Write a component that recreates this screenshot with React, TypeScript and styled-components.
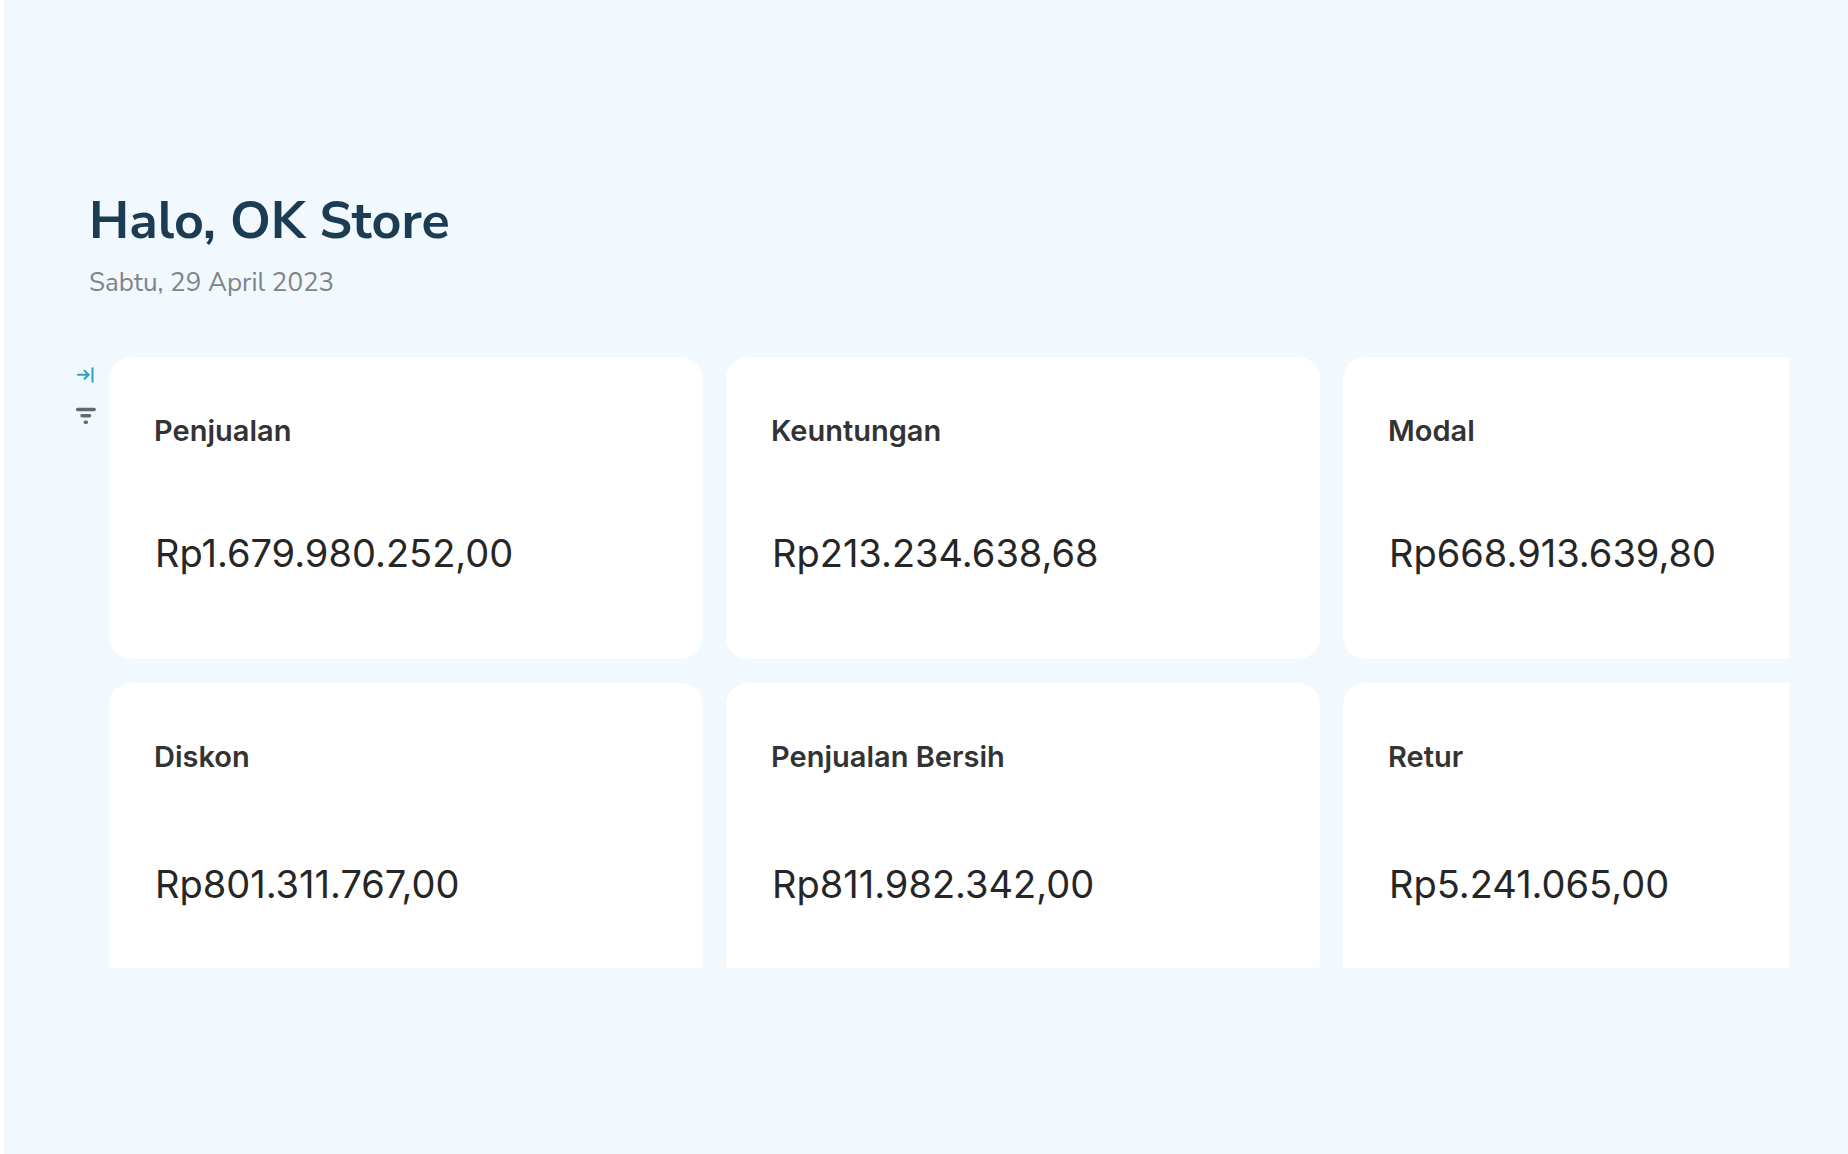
import React from "react";
import styled, { createGlobalStyle } from "styled-components";

const GlobalStyle = createGlobalStyle`
  *, *::before, *::after { box-sizing: border-box; }
  body { margin: 0; background: #f1f8fe; }
`;

const Page = styled.main`
  display: flex;
  flex-direction: column;
  height: 100vh;
  padding: 189px 59px 186px 70px;
  border-left: 4px solid #ffffff;
  background: #f1f8fe;
  font-family: Inter, "Liberation Sans", sans-serif;
`;

const Header = styled.header`
  padding-left: 15px;
  margin-bottom: 56px;
  font-family: "Nunito Sans", Nunito, Lato, "Open Sans", sans-serif;
`;

const Greeting = styled.h1`
  margin: 0;
  color: #1b3c53;
  font-size: 52px;
  font-weight: 700;
  line-height: 64px;
`;

const Today = styled.p`
  margin: 12px 0 0;
  color: #808487;
  font-size: 26px;
  line-height: 36px;
`;

const Body = styled.div`
  display: flex;
  flex: 1;
  gap: 11px;
  min-height: 0;
`;

const Tools = styled.div`
  display: flex;
  flex: none;
  flex-direction: column;
  gap: 18px;
  padding-top: 6px;
`;

const ToolButton = styled.button<{ $tint: string }>`
  display: flex;
  width: 24px;
  height: 24px;
  padding: 0;
  border: 0;
  background: none;
  color: ${(p) => p.$tint};
  cursor: pointer;
`;

const Viewport = styled.section`
  flex: 1;
  min-width: 0;
  overflow: hidden;
`;

const CardGrid = styled.div`
  display: grid;
  grid-template-columns: repeat(3, 594px);
  grid-template-rows: 302px 312px;
  gap: 24px 23px;
`;

const Card = styled.article`
  display: flex;
  flex-direction: column;
  padding: 56px 45px 2px;
  border-radius: 22px;
  background: #ffffff;
`;

const CardTitle = styled.h2`
  margin: 0;
  color: #333333;
  font-size: 29px;
  font-weight: 600;
  line-height: 36px;
`;

const CardValue = styled.p`
  display: flex;
  flex: 1;
  align-items: center;
  margin: 0;
  padding-left: 1px;
  color: #262626;
  font-size: 38px;
  line-height: 48px;
`;

const metrics = [
  { title: "Penjualan", value: "Rp1.679.980.252,00" },
  { title: "Keuntungan", value: "Rp213.234.638,68" },
  { title: "Modal", value: "Rp668.913.639,80" },
  { title: "Diskon", value: "Rp801.311.767,00" },
  { title: "Penjualan Bersih", value: "Rp811.982.342,00" },
  { title: "Retur", value: "Rp5.241.065,00" },
];

function ExpandIcon() {
  return (
    <svg width="24" height="24" viewBox="0 0 24 24" fill="none" stroke="currentColor" strokeWidth="2" strokeLinecap="round" strokeLinejoin="round" aria-hidden="true">
      <path d="M4 11.7H14.5M10.5 7.7l4.2 4-4.2 4" />
      <path d="M18.5 4.5v15" strokeLinecap="butt" />
    </svg>
  );
}

function FilterIcon() {
  return (
    <svg width="24" height="24" viewBox="0 0 24 24" fill="none" stroke="currentColor" strokeWidth="3.4" strokeLinecap="round" aria-hidden="true">
      <path d="M3.6 4.5h16.6M8 10.8h7.6M11.2 17.2h1.2" />
    </svg>
  );
}

export default function App() {
  return (
    <>
      <GlobalStyle />
      <Page>
        <Header>
          <Greeting>Halo, OK Store</Greeting>
          <Today>Sabtu, 29 April 2023</Today>
        </Header>
        <Body>
          <Tools>
            <ToolButton type="button" $tint="#2ba3c4" aria-label="Expand">
              <ExpandIcon />
            </ToolButton>
            <ToolButton type="button" $tint="#66696c" aria-label="Filter">
              <FilterIcon />
            </ToolButton>
          </Tools>
          <Viewport>
            <CardGrid>
              {metrics.map((m) => (
                <Card key={m.title}>
                  <CardTitle>{m.title}</CardTitle>
                  <CardValue>{m.value}</CardValue>
                </Card>
              ))}
            </CardGrid>
          </Viewport>
        </Body>
      </Page>
    </>
  );
}
